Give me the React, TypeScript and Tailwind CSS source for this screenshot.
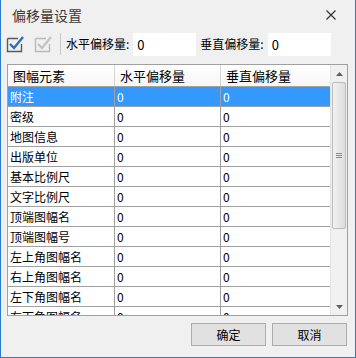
import React from "react";

const rows = [
  "附注",
  "密级",
  "地图信息",
  "出版单位",
  "基本比例尺",
  "文字比例尺",
  "顶端图幅名",
  "顶端图幅号",
  "左上角图幅名",
  "右上角图幅名",
  "左下角图幅名",
  "右下角图幅名",
];

const font = { fontFamily: '"Noto Sans CJK SC", "Noto Sans", sans-serif' };

function CheckIcon(props: { disabled?: boolean }) {
  const box = props.disabled ? "#b9b9b9" : "#5a5a5a";
  const tick = props.disabled ? "#c4c4c4" : "#2e6fbf";
  return (
    <svg width="18" height="18" viewBox="0 0 18 18">
      <path d="M1.5 3.5 H12 M1.5 3.5 V16.5 H15.5 V9" fill="none" stroke={box} strokeWidth="1.4" />
      <path d="M4 9 L8 13 L17 2" fill="none" stroke={tick} strokeWidth="2.4" />
    </svg>
  );
}

function Row(props: { name: string; selected?: boolean }) {
  const cls = props.selected ? "bg-[#3399ff] text-white" : "bg-white text-black";
  return (
    <div className={`flex h-[20px] border-b border-[#a0a0a0] text-[12px] leading-[19px] ${cls}`}>
      <div className="w-[107px] shrink-0 border-r border-[#a0a0a0] pl-[2px] whitespace-nowrap">{props.name}</div>
      <div className="w-[106px] shrink-0 border-r border-[#a0a0a0] pl-[2px]">0</div>
      <div className="w-[107px] shrink-0 pl-[2px]">0</div>
    </div>
  );
}

export default function App() {
  return (
    <div
      className="w-[356px] h-[358px] bg-[#f0f0f0] border-x border-b border-[#2a7bd0] flex flex-col overflow-hidden"
      style={font}
    >
      {/* title bar */}
      <div className="h-[30px] flex items-center justify-between pl-[11px] pr-[19px]">
        <span className="text-[14px] text-[#3a3a3a]">偏移量设置</span>
        <svg width="10" height="10" viewBox="0 0 10 10">
          <path d="M0.5 0.5 L9.5 9.5 M9.5 0.5 L0.5 9.5" stroke="#333" strokeWidth="1.2" />
        </svg>
      </div>

      {/* toolbar */}
      <div className="h-[28px] flex items-center pl-[5px] text-[12px] text-black">
        <CheckIcon />
        <div className="w-[10px]" />
        <CheckIcon disabled />
        <div className="ml-[8px] mr-[5px] w-px h-[22px] bg-[#c8c8c8]" />
        <span>水平偏移量:</span>
        <div className="ml-[4px] w-[63px] h-[23px] bg-white pl-[4px] leading-[23px] text-[13px]">0</div>
        <span className="ml-[4px]">垂直偏移量:</span>
        <div className="ml-[4px] w-[63px] h-[23px] bg-white pl-[4px] leading-[23px] text-[13px]">0</div>
      </div>

      {/* grid */}
      <div className="mt-[6px] ml-[6px] w-[341px] h-[252px] border border-[#a0a0a0] bg-white flex overflow-hidden">
        <div className="w-[322px] shrink-0">
          <div className="flex h-[22px] border-b border-[#a0a0a0] bg-gradient-to-b from-white to-[#f6f6f6] text-[13px] leading-[21px] text-black">
            <div className="w-[107px] shrink-0 border-r border-[#d5d5d5] pl-[5px]">图幅元素</div>
            <div className="w-[106px] shrink-0 border-r border-[#d5d5d5] pl-[5px]">水平偏移量</div>
            <div className="w-[107px] shrink-0 pl-[5px]">垂直偏移量</div>
          </div>
          {rows.map((r, i) => (
            <Row key={r} name={r} selected={i === 0} />
          ))}
        </div>

        {/* scrollbar */}
        <div className="w-[17px] shrink-0 bg-[#f0f0f0] border-l border-[#e3e3e3] flex flex-col">
          <div className="h-[17px] flex items-center justify-center">
            <svg width="7" height="4" viewBox="0 0 7 4">
              <path d="M0 4 L3.5 0 L7 4 Z" fill="#606060" />
            </svg>
          </div>
          <div className="mx-[1px] h-[147px] rounded-[2px] border border-[#bcbcbc] bg-gradient-to-r from-[#f2f2f2] to-[#dcdcdc] flex items-center justify-center">
            <div className="flex flex-col gap-[1px]">
              <div className="w-[6px] h-px bg-[#8a8a8a]" />
              <div className="w-[6px] h-px bg-[#8a8a8a]" />
              <div className="w-[6px] h-px bg-[#8a8a8a]" />
            </div>
          </div>
          <div className="flex-1" />
          <div className="h-[17px] flex items-center justify-center">
            <svg width="7" height="4" viewBox="0 0 7 4">
              <path d="M0 0 L3.5 4 L7 0 Z" fill="#606060" />
            </svg>
          </div>
        </div>
      </div>

      {/* buttons */}
      <div className="mt-[7px] flex justify-end gap-[6px] pr-[8px] text-[12px] text-black">
        <button className="w-[75px] h-[23px] bg-[#e1e1e1] border border-[#adadad]">确定</button>
        <button className="w-[75px] h-[23px] bg-[#e1e1e1] border border-[#adadad]">取消</button>
      </div>
    </div>
  );
}
